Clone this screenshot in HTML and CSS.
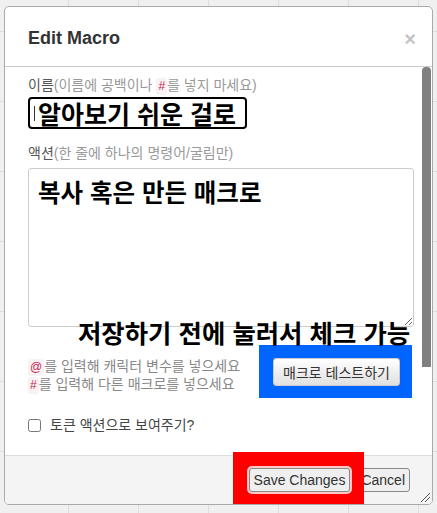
FILE: index.html
```html
<!DOCTYPE html>
<html lang="ko">
    <head>
        <meta charset="UTF-8">
        <title>Edit Macro</title>
        <link rel="stylesheet" href="styles.css">
    </head>
    <body>

        <div class="modal">
            <div class="modal-header">
                <h4>Edit Macro</h4>
                <span class="close">&times;</span>
            </div>

            <div class="modal-main">
                <div class="modal-body">
                    <label class="field-label">이름<span class="muted">(이름에 공백이나 <code>#</code>를 넣지 마세요)</span></label>
                    <div class="name-input"><span class="caret"></span>알아보기 쉬운 걸로</div>

                    <label class="field-label action-label">액션<span class="muted">(한 줄에 하나의 명령어/굴림만)</span></label>
                    <textarea class="action-input">복사 혹은 만든 매크로</textarea>

                    <div class="note">저장하기 전에 눌러서 체크 가능</div>

                    <div class="help-row">
                        <div class="help">
                            <div><code>@</code>를 입력해 캐릭터 변수를 넣으세요</div>
                            <div><code>#</code>를 입력해 다른 매크로를 넣으세요</div>
                        </div>
                        <div class="mark-blue">
                            <button class="btn btn-test">매크로 테스트하기</button>
                        </div>
                    </div>

                    <label class="check-row">
                        <input type="checkbox">
                        <span>토큰 액션으로 보여주기?</span>
                    </label>
                </div>
                <div class="scrollbar"><div class="thumb"></div></div>
            </div>

            <div class="modal-footer">
                <div class="mark-red"></div>
                <button class="btn btn-save">Save Changes</button>
                <button class="btn btn-cancel">Cancel</button>
                <svg class="grip" width="11" height="11" viewBox="0 0 11 11">
                    <path d="M1 10 L10 1 M5 10 L10 5" stroke="#555" stroke-width="1" fill="none"/>
                </svg>
            </div>
        </div>

    </body>
</html>
```

FILE: styles.css
```css
body {
    margin: 0;
    padding: 6px 4px;
    font-family: 'Liberation Sans', 'Noto Sans CJK KR', sans-serif;
    background-color: #f0f0f0;
    background-image:
        linear-gradient(to right, #dddddd 1px, transparent 1px),
        linear-gradient(to bottom, #dddddd 1px, transparent 1px);
    background-size: 70px 70px;
    background-position: -2px 31px;
}
.modal {
    width: 427px;
    height: 497px;
    border: 1px solid #aaa;
    border-radius: 5px;
    background: #fff;
    display: flex;
    flex-direction: column;
    overflow: hidden;
}
.modal-header {
    height: 60px;
    flex-shrink: 0;
    box-sizing: border-box;
    padding: 4px 16px 0 23px;
    border-bottom: 1px solid #ccc;
    display: flex;
    align-items: center;
    justify-content: space-between;
}
.modal-header h4 {
    margin: 0;
    font-size: 18px;
    font-weight: bold;
    color: #333;
}
.close {
    font-size: 20px;
    font-weight: bold;
    color: #c4c4c4;
    line-height: 1;
}
.modal-main {
    flex: 1;
    min-height: 0;
    display: flex;
}
.modal-body {
    flex: 1;
    position: relative;
    overflow: hidden;
    padding: 9px 8px 0 23px;
}
.scrollbar {
    width: 10px;
    flex-shrink: 0;
}
.thumb {
    width: 9px;
    height: 300px;
    background: #808080;
    border-radius: 4px 4px 0 0;
}
.field-label {
    display: block;
    font-size: 14px;
    line-height: 18px;
    color: #555;
}
.muted {
    color: #999;
}
code {
    display: inline-block;
    font-family: 'Liberation Sans', sans-serif;
    font-size: 12px;
    line-height: 17px;
    padding: 0 2px;
    color: #c7254e;
    background: #f9f2f4;
    border-radius: 3px;
}
.name-input {
    margin-top: 2px;
    width: 211px;
    height: 28px;
    border: 2px solid #000;
    border-radius: 4px;
    padding-left: 4px;
    font-family: 'Noto Sans CJK KR', sans-serif;
    font-size: 25px;
    font-weight: bold;
    line-height: 28px;
    color: #000;
    display: flex;
    align-items: center;
    white-space: nowrap;
}
.caret {
    display: inline-block;
    width: 1px;
    height: 15px;
    background: #333;
    margin-right: 3px;
}
.action-label {
    margin-top: 15px;
}
.action-input {
    display: block;
    box-sizing: border-box;
    width: 386px;
    height: 159px;
    margin-top: 6px;
    padding: 8px 9px;
    border: 1px solid #ccc;
    border-radius: 3px;
    font-family: 'Noto Sans CJK KR', sans-serif;
    font-size: 24.5px;
    font-weight: bold;
    line-height: 30px;
    color: #000;
}
.note {
    position: absolute;
    left: 73px;
    top: 250px;
    font-family: 'Noto Sans CJK KR', sans-serif;
    font-size: 25.4px;
    font-weight: bold;
    line-height: 30px;
    color: #000;
    white-space: nowrap;
}
.help-row {
    display: flex;
    justify-content: space-between;
    align-items: flex-start;
    margin-top: 18px;
    padding-right: 2px;
}
.help {
    margin-top: 13px;
    font-size: 14px;
    line-height: 17px;
    color: #888;
}
.mark-blue {
    background: #0064ff;
    padding: 13px 12px 12px 14px;
}
.btn {
    font-family: 'Liberation Sans', 'Noto Sans CJK KR', sans-serif;
    color: #333;
    cursor: pointer;
}
.btn-test {
    width: 127px;
    height: 28px;
    padding: 0;
    font-size: 14px;
    border: 1px solid #ccc;
    border-radius: 3px;
    background: linear-gradient(to bottom, #fff, #e0e0e0);
}
.check-row {
    display: flex;
    align-items: center;
    margin-top: 18px;
    font-size: 14px;
    line-height: 18px;
    color: #444;
}
.check-row input {
    margin: 0 9px 0 0;
    width: 13px;
    height: 13px;
}
.modal-footer {
    position: relative;
    height: 48px;
    flex-shrink: 0;
    border-top: 1px solid #ddd;
    background: #f4f4f4;
    display: flex;
    align-items: center;
    justify-content: flex-end;
    padding-right: 22px;
}
.mark-red {
    position: absolute;
    left: 228px;
    top: -4px;
    width: 131px;
    height: 55px;
    background: #ff0000;
}
.btn-save,
.btn-cancel {
    height: 24px;
    font-size: 14px;
    padding: 0 4px;
    border: 1px solid #888;
    border-radius: 3px;
    background: #efefef;
}
.btn-save {
    position: relative;
    z-index: 2;
    box-shadow: 0 0 0 2px #ffc8c8;
}
.btn-cancel {
    margin-left: 6px;
}
.grip {
    position: absolute;
    right: 1px;
    bottom: 1px;
}
```
